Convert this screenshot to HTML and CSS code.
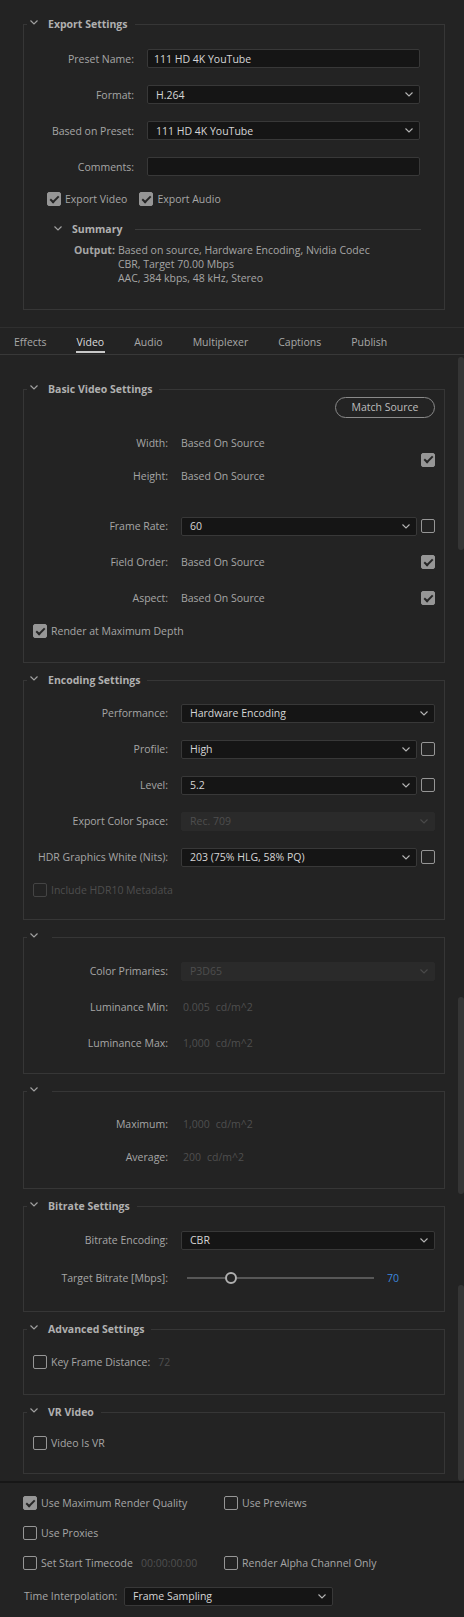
FILE: index.html
```html
<!DOCTYPE html>
<html lang="en">
<head>
    <meta charset="UTF-8">
    <meta name="viewport" content="width=device-width, initial-scale=1.0">
    <link rel="stylesheet" href="styles.css">
    <title>Export Settings</title>
</head>
<body>
    <div class="top">
        <fieldset class="group">
            <legend><svg class="chev" viewBox="0 0 8 5"><polyline points="0.5,0.5 4,4 7.5,0.5"/></svg><span>Export Settings</span></legend>
            <div class="preset-form">
                <label>Preset Name:</label>
                <div class="field input">111 HD 4K YouTube</div>
                <label>Format:</label>
                <div class="field select"><span>H.264</span><svg class="arrow" viewBox="0 0 8 5"><polyline points="0.5,0.5 4,4 7.5,0.5"/></svg></div>
                <label>Based on Preset:</label>
                <div class="field select"><span>111 HD 4K YouTube</span><svg class="arrow" viewBox="0 0 8 5"><polyline points="0.5,0.5 4,4 7.5,0.5"/></svg></div>
                <label>Comments:</label>
                <div class="field input"></div>
            </div>
            <div class="export-checks">
                <div class="check"><span class="cb on"></span>Export Video</div>
                <div class="check"><span class="cb on"></span>Export Audio</div>
            </div>
            <div class="summary-head">
                <svg class="chev" viewBox="0 0 8 5"><polyline points="0.5,0.5 4,4 7.5,0.5"/></svg>
                <span>Summary</span>
                <div class="rule"></div>
            </div>
            <div class="summary">
                <b>Output:</b>
                <div>
                    <div>Based on source, Hardware Encoding, Nvidia Codec</div>
                    <div>CBR, Target 70.00 Mbps</div>
                    <div>AAC, 384 kbps, 48 kHz, Stereo</div>
                </div>
            </div>
        </fieldset>
    </div>

    <div class="tabs">
        <div class="tab">Effects</div>
        <div class="tab active">Video</div>
        <div class="tab">Audio</div>
        <div class="tab">Multiplexer</div>
        <div class="tab">Captions</div>
        <div class="tab">Publish</div>
    </div>

    <div class="scroll">
        <div class="scroll-content">
            <!-- Basic Video Settings -->
            <fieldset class="group first">
                <legend><svg class="chev" viewBox="0 0 8 5"><polyline points="0.5,0.5 4,4 7.5,0.5"/></svg><span>Basic Video Settings</span></legend>
                <div class="match-row"><div class="pill">Match Source</div></div>
                <div class="linked">
                    <label>Width:</label><span class="val">Based On Source</span>
                    <label>Height:</label><span class="val">Based On Source</span>
                    <span class="cb on"></span>
                </div>
                <div class="row mt30">
                    <label>Frame Rate:</label>
                    <div class="field select"><span>60</span><svg class="arrow" viewBox="0 0 8 5"><polyline points="0.5,0.5 4,4 7.5,0.5"/></svg></div>
                    <span class="cb"></span>
                </div>
                <div class="row mt16">
                    <label>Field Order:</label>
                    <span class="val">Based On Source</span>
                    <span class="cb on"></span>
                </div>
                <div class="row mt16">
                    <label>Aspect:</label>
                    <span class="val">Based On Source</span>
                    <span class="cb on"></span>
                </div>
                <div class="row mt13 pb21">
                    <div class="check"><span class="cb on"></span>Render at Maximum Depth</div>
                </div>
            </fieldset>

            <!-- Encoding Settings -->
            <fieldset class="group">
                <legend><svg class="chev" viewBox="0 0 8 5"><polyline points="0.5,0.5 4,4 7.5,0.5"/></svg><span>Encoding Settings</span></legend>
                <div class="row mt15">
                    <label>Performance:</label>
                    <div class="field select"><span>Hardware Encoding</span><svg class="arrow" viewBox="0 0 8 5"><polyline points="0.5,0.5 4,4 7.5,0.5"/></svg></div>
                </div>
                <div class="row mt16">
                    <label>Profile:</label>
                    <div class="field select"><span>High</span><svg class="arrow" viewBox="0 0 8 5"><polyline points="0.5,0.5 4,4 7.5,0.5"/></svg></div>
                    <span class="cb"></span>
                </div>
                <div class="row mt16">
                    <label>Level:</label>
                    <div class="field select"><span>5.2</span><svg class="arrow" viewBox="0 0 8 5"><polyline points="0.5,0.5 4,4 7.5,0.5"/></svg></div>
                    <span class="cb"></span>
                </div>
                <div class="row mt16">
                    <label>Export Color Space:</label>
                    <div class="field select disabled"><span>Rec. 709</span><svg class="arrow" viewBox="0 0 8 5"><polyline points="0.5,0.5 4,4 7.5,0.5"/></svg></div>
                </div>
                <div class="row mt16">
                    <label>HDR Graphics White (Nits):</label>
                    <div class="field select"><span>203 (75% HLG, 58% PQ)</span><svg class="arrow" viewBox="0 0 8 5"><polyline points="0.5,0.5 4,4 7.5,0.5"/></svg></div>
                    <span class="cb"></span>
                </div>
                <div class="row mt13 pb19">
                    <div class="check dim"><span class="cb"></span>Include HDR10 Metadata</div>
                </div>
            </fieldset>

            <!-- HDR10 mastering -->
            <fieldset class="group">
                <legend class="bare"><svg class="chev" viewBox="0 0 8 5"><polyline points="0.5,0.5 4,4 7.5,0.5"/></svg></legend>
                <div class="row mt16">
                    <label>Color Primaries:</label>
                    <div class="field select disabled"><span>P3D65</span><svg class="arrow" viewBox="0 0 8 5"><polyline points="0.5,0.5 4,4 7.5,0.5"/></svg></div>
                </div>
                <div class="row mt16">
                    <label>Luminance Min:</label>
                    <span class="num">0.005</span><span class="unit">cd/m^2</span>
                </div>
                <div class="row mt16 pb20">
                    <label>Luminance Max:</label>
                    <span class="num">1,000</span><span class="unit">cd/m^2</span>
                </div>
            </fieldset>

            <!-- content light level -->
            <fieldset class="group">
                <legend class="bare"><svg class="chev" viewBox="0 0 8 5"><polyline points="0.5,0.5 4,4 7.5,0.5"/></svg></legend>
                <div class="row mt15">
                    <label>Maximum:</label>
                    <span class="num">1,000</span><span class="unit">cd/m^2</span>
                </div>
                <div class="row mt13 pb21">
                    <label>Average:</label>
                    <span class="num">200</span><span class="unit">cd/m^2</span>
                </div>
            </fieldset>

            <!-- Bitrate Settings -->
            <fieldset class="group">
                <legend><svg class="chev" viewBox="0 0 8 5"><polyline points="0.5,0.5 4,4 7.5,0.5"/></svg><span>Bitrate Settings</span></legend>
                <div class="row mt16">
                    <label>Bitrate Encoding:</label>
                    <div class="field select"><span>CBR</span><svg class="arrow" viewBox="0 0 8 5"><polyline points="0.5,0.5 4,4 7.5,0.5"/></svg></div>
                </div>
                <div class="row mt18 pb23">
                    <label>Target Bitrate [Mbps]:</label>
                    <div class="slider">
                        <div class="track before"></div>
                        <div class="knob"></div>
                        <div class="track after"></div>
                    </div>
                    <span class="slider-val">70</span>
                </div>
            </fieldset>

            <!-- Advanced Settings -->
            <fieldset class="group">
                <legend><svg class="chev" viewBox="0 0 8 5"><polyline points="0.5,0.5 4,4 7.5,0.5"/></svg><span>Advanced Settings</span></legend>
                <div class="row mt15 pb22">
                    <div class="check"><span class="cb"></span>Key Frame Distance:<span class="num after-label">72</span></div>
                </div>
            </fieldset>

            <!-- VR Video -->
            <fieldset class="group">
                <legend><svg class="chev" viewBox="0 0 8 5"><polyline points="0.5,0.5 4,4 7.5,0.5"/></svg><span>VR Video</span></legend>
                <div class="row mt13 pb20">
                    <div class="check"><span class="cb"></span>Video Is VR</div>
                </div>
            </fieldset>
        </div>
        <div class="scrollbar">
            <div class="thumb t1"></div>
            <div class="thumb t2"></div>
            <div class="thumb t3"></div>
        </div>
    </div>

    <div class="bottom">
        <div class="bottom-grid">
            <div class="check"><span class="cb on"></span>Use Maximum Render Quality</div>
            <div class="check"><span class="cb"></span>Use Previews</div>
            <div class="check"><span class="cb"></span>Use Proxies</div>
            <div></div>
            <div class="check"><span class="cb"></span>Set Start Timecode<span class="num after-label">00:00:00:00</span></div>
            <div class="check"><span class="cb"></span>Render Alpha Channel Only</div>
        </div>
        <div class="interp">
            <label>Time Interpolation:</label>
            <div class="field select"><span>Frame Sampling</span><svg class="arrow" viewBox="0 0 8 5"><polyline points="0.5,0.5 4,4 7.5,0.5"/></svg></div>
        </div>
    </div>
</body>
</html>
```

FILE: styles.css
```css
        body {
            font-family: "Open Sans", "Noto Sans", sans-serif;
            font-size: 10.5px;
            margin: 0;
            padding: 0;
            background-color: #232323;
            color: #a6a6a6;
            width: 464px;
        }

        label {
            white-space: nowrap;
        }

        /* 그룹 박스 (fieldset) */
        .group {
            margin: 9px 0 0 0;
            padding: 0 9px 0 0;
            border: 1px solid #363636;
            min-width: 0;
        }

        .group legend {
            display: flex;
            align-items: center;
            height: 16px;
            margin-left: 3px;
            padding: 0 7px 0 3px;
            font-weight: bold;
            color: #b0b0b0;
            line-height: 16px;
        }

        .group legend span {
            margin-left: 10px;
        }

        .group legend.bare {
            padding-right: 14px;
        }

        .chev {
            width: 8px;
            height: 5px;
            margin-top: -3px;
            fill: none;
            stroke: #a0a0a0;
            stroke-width: 1.2;
        }

        /* 상단 Export Settings */
        .top {
            padding: 16px 19px 17px 23px;
        }

        .top .group {
            margin: 0;
            padding: 0 0 24px 0;
        }

        .preset-form {
            display: grid;
            grid-template-columns: 110px 273px;
            grid-auto-rows: 19px;
            column-gap: 13px;
            row-gap: 17px;
            padding-top: 17px;
            align-items: center;
        }

        .preset-form label {
            text-align: right;
        }

        .field {
            box-sizing: border-box;
            height: 19px;
            background-color: #151515;
            border: 1px solid #383838;
            border-radius: 2px;
            color: #d6d6d6;
            display: flex;
            align-items: center;
            padding-left: 6px;
            white-space: nowrap;
        }

        .select {
            padding-left: 8px;
            padding-right: 6px;
        }

        .select span {
            flex: 1;
        }

        .arrow {
            width: 8px;
            height: 5px;
            fill: none;
            stroke: #b5b5b5;
            stroke-width: 1.1;
        }

        .select.disabled {
            background-color: #2a2a2a;
            border-color: #2a2a2a;
            color: #4e4e4e;
        }

        .select.disabled .arrow {
            stroke: #4a4a4a;
        }

        /* 체크박스 */
        .cb {
            position: relative;
            box-sizing: border-box;
            display: inline-block;
            flex: none;
            width: 14px;
            height: 14px;
            border: 1.5px solid #969696;
            border-radius: 2px;
        }

        .cb.on {
            background-color: #969696;
        }

        .cb.on::after {
            content: '';
            position: absolute;
            left: 3.5px;
            top: 0.5px;
            width: 3px;
            height: 7px;
            border-right: 2px solid #262626;
            border-bottom: 2px solid #262626;
            transform: rotate(45deg);
        }

        .check {
            display: flex;
            align-items: center;
            white-space: nowrap;
        }

        .check .cb {
            margin-right: 4px;
        }

        .check.dim {
            color: #4e4e4e;
        }

        .check.dim .cb {
            border-color: #444;
        }

        .export-checks {
            display: flex;
            gap: 12px;
            height: 20px;
            margin: 13px 0 0 23px;
        }

        .summary-head {
            display: flex;
            align-items: center;
            height: 16px;
            margin: 12px 23px 0 30px;
            font-weight: bold;
            color: #b0b0b0;
        }

        .summary-head span {
            margin-left: 10px;
        }

        .summary-head .chev {
            margin-top: -2px;
        }

        .rule {
            flex: 1;
            border-top: 1px solid #3c3c3c;
            margin-left: 13px;
        }

        .summary {
            display: flex;
            gap: 3px;
            margin: 6px 0 0 50px;
            line-height: 14px;
        }

        /* 탭 */
        .tabs {
            display: flex;
            gap: 28px;
            padding: 0 0 1px 13px;
            border-top: 1px solid #2f2f2f;
            border-bottom: 1px solid #383838;
        }

        .tab {
            padding: 6px 1px 1px 1px;
            line-height: 16px;
            border-bottom: 2px solid transparent;
            color: #a8a8a8;
        }

        .tab.active {
            color: #dcdcdc;
            border-bottom-color: #c8c8c8;
        }

        /* 스크롤 영역 */
        .scroll {
            display: flex;
        }

        .scroll-content {
            width: 422px;
            padding: 0 0 7px 23px;
        }

        .scroll-content .group.first {
            margin-top: 26px;
        }

        .scrollbar {
            width: 6px;
            margin-left: 13px;
        }

        .thumb {
            background-color: #353535;
            border-radius: 3px;
        }

        .t1 { margin-top: 2px; height: 193px; }
        .t2 { margin-top: 447px; height: 197px; }
        .t3 { margin-top: 91px; height: 196px; }

        .match-row {
            display: flex;
            justify-content: flex-end;
        }

        .pill {
            box-sizing: border-box;
            width: 100px;
            height: 21px;
            border: 1px solid #8a8a8a;
            border-radius: 11px;
            text-align: center;
            line-height: 19px;
            color: #bdbdbd;
        }

        .linked {
            display: grid;
            grid-template-columns: 144px 1fr 14px;
            grid-template-rows: 20px 20px;
            column-gap: 13px;
            row-gap: 13px;
            align-items: center;
            margin-top: 15px;
        }

        .linked label {
            text-align: right;
        }

        .linked .cb {
            grid-column: 3;
            grid-row: 1 / span 2;
        }

        .row {
            display: flex;
            align-items: center;
            height: 20px;
        }

        .row label {
            width: 144px;
            flex: none;
            text-align: right;
            margin-right: 13px;
        }

        .row .field {
            flex: 1;
        }

        .row .field + .cb {
            margin-left: 4px;
        }

        .row .val {
            flex: 1;
        }

        .row .check {
            margin-left: 9px;
        }

        .num {
            color: #4f4f4f;
            margin-left: 2px;
        }

        .unit {
            color: #4f4f4f;
            margin-left: 6px;
        }

        .after-label {
            margin-left: 8px;
        }

        .mt13 { margin-top: 13px; }
        .mt15 { margin-top: 15px; }
        .mt16 { margin-top: 16px; }
        .mt18 { margin-top: 18px; }
        .mt30 { margin-top: 30px; }
        .pb19 { margin-bottom: 19px; }
        .pb20 { margin-bottom: 20px; }
        .pb21 { margin-bottom: 21px; }
        .pb22 { margin-bottom: 22px; }
        .pb23 { margin-bottom: 23px; }

        /* 슬라이더 */
        .slider {
            display: flex;
            align-items: center;
            width: 187px;
            margin-left: 6px;
        }

        .track {
            height: 2px;
            background-color: #575757;
        }

        .track.before {
            width: 38px;
        }

        .track.after {
            flex: 1;
        }

        .knob {
            box-sizing: border-box;
            width: 12px;
            height: 12px;
            border: 2px solid #b0b0b0;
            border-radius: 50%;
        }

        .slider-val {
            margin-left: 13px;
            color: #3b86dc;
        }

        /* 하단 */
        .bottom {
            border-top: 2px solid #171717;
            padding: 10px 0 11px 23px;
        }

        .bottom-grid {
            display: grid;
            grid-template-columns: 201px auto;
            grid-auto-rows: 20px;
            row-gap: 10px;
            align-items: center;
        }

        .interp {
            display: flex;
            align-items: center;
            height: 20px;
            margin-top: 13px;
        }

        .interp label {
            width: 100px;
            margin-left: 1px;
        }

        .interp .field {
            width: 209px;
            height: 19px;
        }
```
